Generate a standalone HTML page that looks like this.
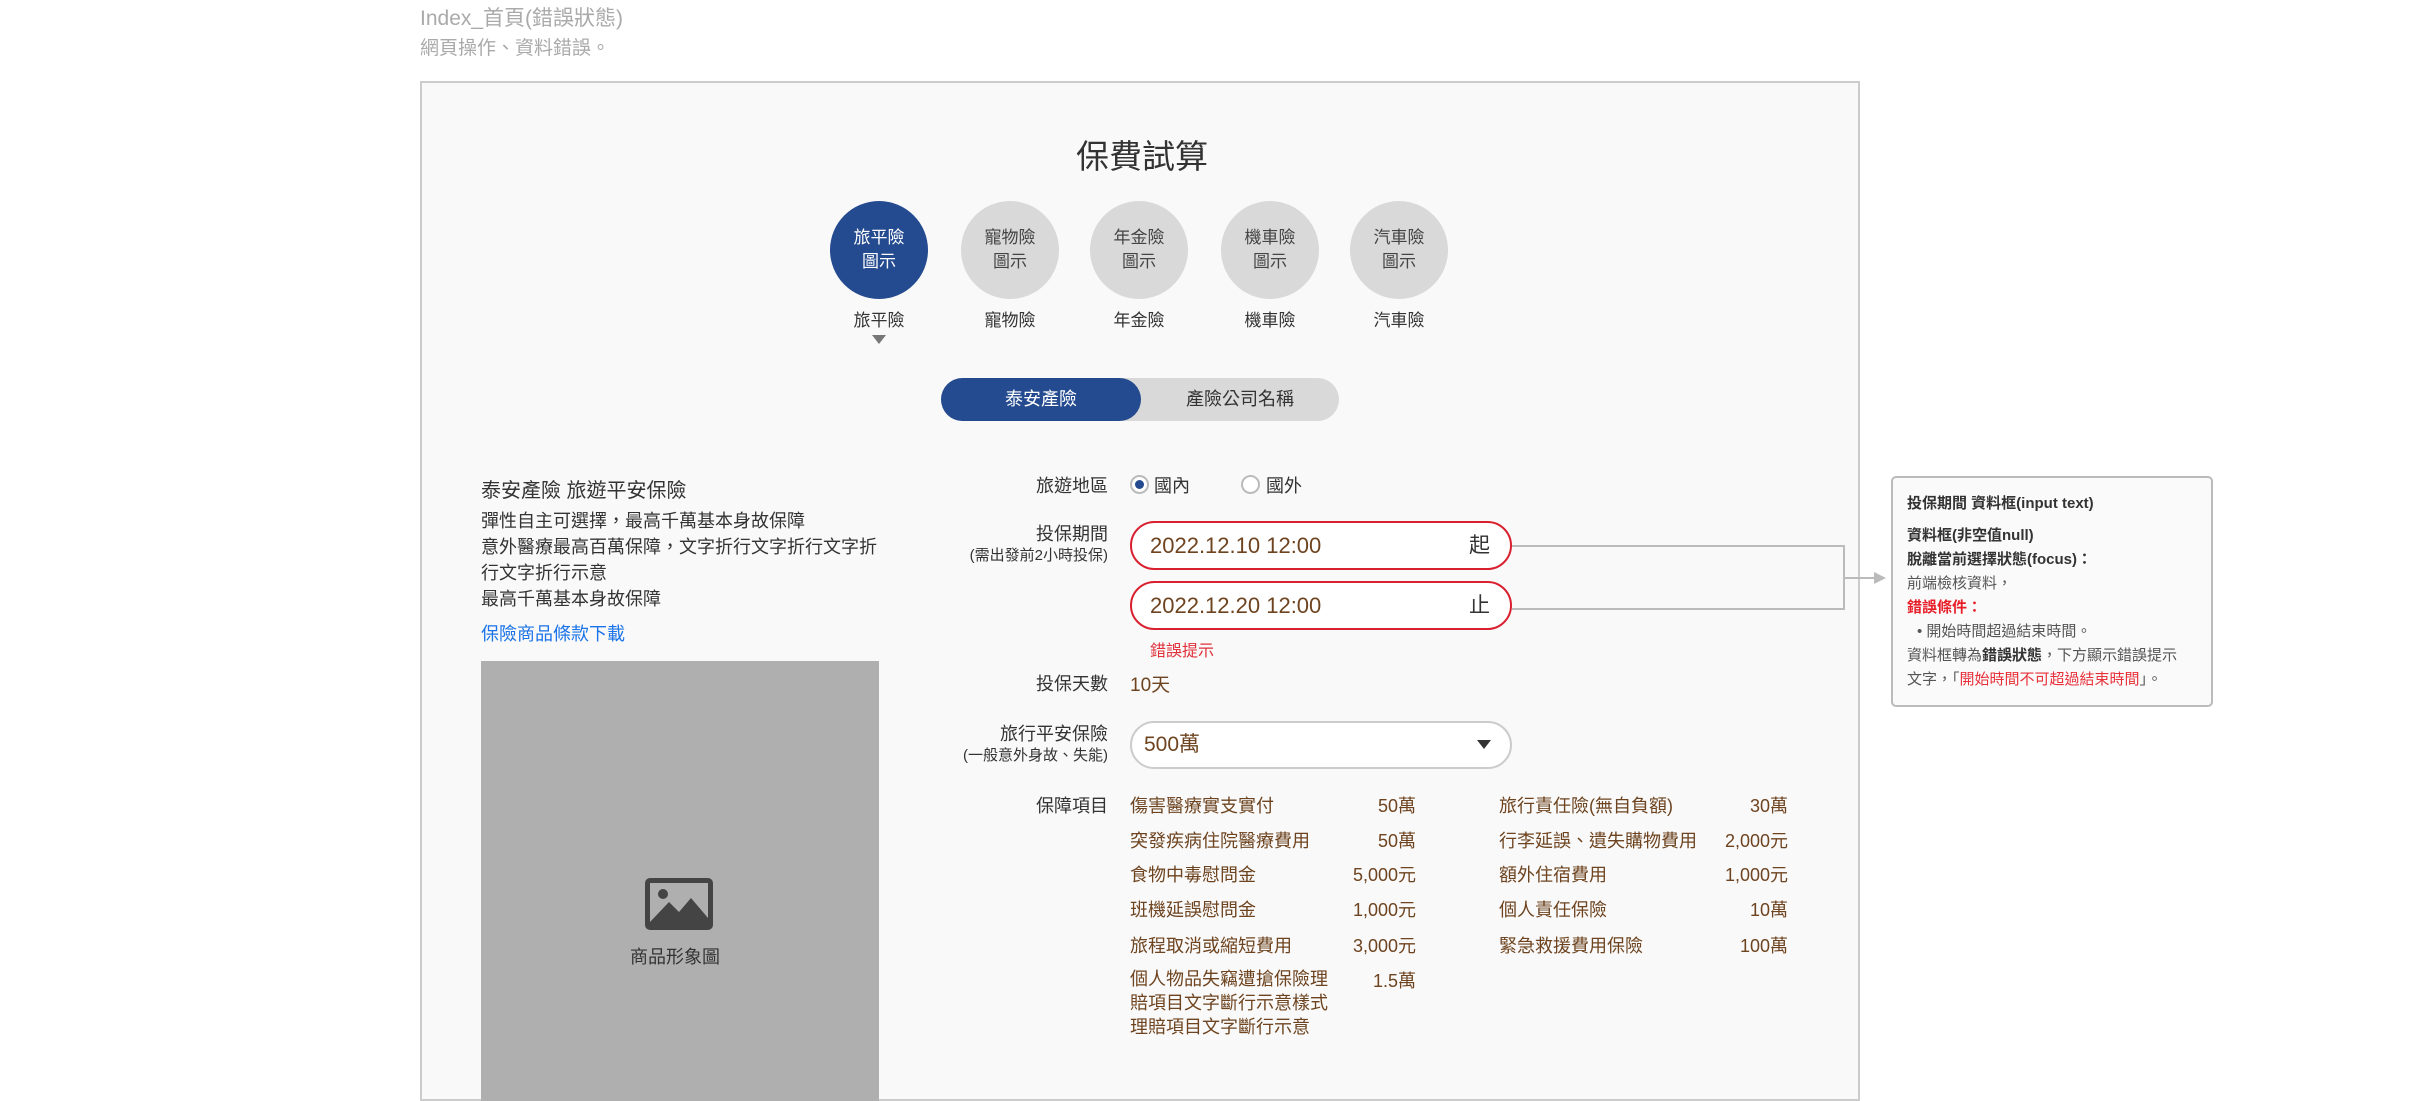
<!DOCTYPE html>
<html><head><meta charset="utf-8"><style>
*{margin:0;padding:0;box-sizing:border-box}
body{width:2410px;height:1088px;overflow:hidden;background:#fff;font-family:"Liberation Sans","Noto Sans CJK TC",sans-serif;position:relative;color:#333}
.a{position:absolute;white-space:nowrap}
.frame{position:absolute;left:420px;top:81px;width:1440px;height:1020px;border:2px solid #ccc;background:#f9f9f9}
.c{position:absolute;width:98px;height:98px;border-radius:50%;background:#d9d9d9;color:#444;font-size:17px;line-height:24px;text-align:center;padding-top:25px}
.cl{position:absolute;width:120px;text-align:center;font-size:17px;color:#333}
.lbl{position:absolute;right:1302px;text-align:right;font-size:18px;color:#333;white-space:nowrap}
.br{color:#6e4420}
.inp{position:absolute;left:1130px;width:382px;height:49px;border:2px solid #d9202f;border-radius:25px;background:#fff;font-size:22px;color:#6e4420;padding:0 0 0 18px;line-height:45px}
.inp span{position:absolute;right:20px;color:#333;font-size:21px}
.it{position:absolute;font-size:18px;color:#6e4420;white-space:nowrap}
.v{position:absolute;font-size:18px;color:#6e4420;text-align:right;width:150px}
.note{position:absolute;left:1891px;top:476px;width:322px;height:231px;border:2px solid #bbb;border-radius:5px;background:#fafafa;font-size:15px;color:#333;padding:14px 14px}
</style></head><body>
<div class="a" style="left:420px;top:2px;font-size:21px;color:#aaa">Index_首頁(錯誤狀態)</div>
<div class="a" style="left:420px;top:33px;font-size:19px;color:#aaa">網頁操作、資料錯誤。</div>
<div class="frame"></div>
<div class="a" style="left:1076px;top:130px;font-size:33px;color:#333">保費試算</div>

<div class="c" style="left:830px;top:201px;background:#244a8f;color:#fff">旅平險<br>圖示</div>
<div class="c" style="left:961px;top:201px">寵物險<br>圖示</div>
<div class="c" style="left:1090px;top:201px">年金險<br>圖示</div>
<div class="c" style="left:1221px;top:201px">機車險<br>圖示</div>
<div class="c" style="left:1350px;top:201px">汽車險<br>圖示</div>
<div class="cl" style="left:819px;top:306px">旅平險</div>
<div class="cl" style="left:950px;top:306px">寵物險</div>
<div class="cl" style="left:1079px;top:306px">年金險</div>
<div class="cl" style="left:1210px;top:306px">機車險</div>
<div class="cl" style="left:1339px;top:306px">汽車險</div>
<div class="a" style="left:872px;top:335px;width:0;height:0;border-left:7px solid transparent;border-right:7px solid transparent;border-top:9px solid #777"></div>

<div class="a" style="left:941px;top:378px;width:398px;height:43px;border-radius:22px;background:#d9d9d9"></div>
<div class="a" style="left:941px;top:378px;width:200px;height:43px;border-radius:22px;background:#244a8f;color:#fff;font-size:18px;text-align:center;line-height:43px">泰安產險</div>
<div class="a" style="left:1141px;top:378px;width:198px;height:43px;color:#333;font-size:18px;text-align:center;line-height:43px">產險公司名稱</div>

<div class="a" style="left:481px;top:474px;font-size:20px;color:#333">泰安產險 旅遊平安保險</div>
<div class="a" style="left:481px;top:508px;font-size:18px;line-height:26px;color:#333">彈性自主可選擇，最高千萬基本身故保障</div>
<div class="a" style="left:481px;top:534px;font-size:18px;line-height:26px;color:#333">意外醫療最高百萬保障，文字折行文字折行文字折<br>行文字折行示意</div>
<div class="a" style="left:481px;top:586px;font-size:18px;line-height:26px;color:#333">最高千萬基本身故保障</div>
<div class="a" style="left:481px;top:620px;font-size:18px;color:#1a73e8">保險商品條款下載</div>
<div class="a" style="left:481px;top:661px;width:398px;height:440px;background:#afafaf"></div>
<svg class="a" style="left:645px;top:878px" width="68" height="52" viewBox="0 0 68 52"><rect x="0" y="0" width="68" height="52" rx="5" fill="#444"/><rect x="5" y="5" width="58" height="42" fill="#afafaf"/><circle cx="18" cy="16" r="5" fill="#444"/><path d="M5 44 L24 24 L34 34 L46 20 L63 40 L63 47 L5 47Z" fill="#444"/></svg>
<div class="a" style="left:630px;top:943px;font-size:18px;color:#333">商品形象圖</div>

<div class="lbl" style="top:472px">旅遊地區</div>
<div class="a" style="left:1130px;top:475px;width:19px;height:19px;border-radius:50%;border:2px solid #bbb;background:#fff"></div>
<div class="a" style="left:1135px;top:480px;width:9px;height:9px;border-radius:50%;background:#244a8f"></div>
<div class="a" style="left:1154px;top:472px;font-size:18px">國內</div>
<div class="a" style="left:1241px;top:475px;width:19px;height:19px;border-radius:50%;border:2px solid #bbb;background:#fff"></div>
<div class="a" style="left:1266px;top:472px;font-size:18px">國外</div>

<div class="lbl" style="top:520px">投保期間</div>
<div class="lbl" style="top:544px;font-size:15px">(需出發前2小時投保)</div>
<div class="inp" style="top:521px">2022.12.10 12:00<span>起</span></div>
<div class="inp" style="top:581px">2022.12.20 12:00<span>止</span></div>
<div class="a" style="left:1150px;top:637px;font-size:16px;color:#e0303a">錯誤提示</div>

<div class="lbl" style="top:670px">投保天數</div>
<div class="a br" style="left:1130px;top:670px;font-size:19px">10天</div>

<div class="lbl" style="top:720px">旅行平安保險</div>
<div class="lbl" style="top:744px;font-size:15px">(一般意外身故、失能)</div>
<div class="a" style="left:1130px;top:721px;width:382px;height:48px;border:2px solid #ccc;border-radius:24px;background:#fff;font-size:21px;color:#6e4420;padding-left:12px;line-height:44px">500萬</div>
<div class="a" style="left:1477px;top:740px;width:0;height:0;border-left:7px solid transparent;border-right:7px solid transparent;border-top:9px solid #333"></div>

<div class="lbl" style="top:792px">保障項目</div>
<div class="it" style="left:1130px;top:792px">傷害醫療實支實付</div><div class="v" style="left:1266px;top:792px">50萬</div>
<div class="it" style="left:1130px;top:827px">突發疾病住院醫療費用</div><div class="v" style="left:1266px;top:827px">50萬</div>
<div class="it" style="left:1130px;top:861px">食物中毒慰問金</div><div class="v" style="left:1266px;top:861px">5,000元</div>
<div class="it" style="left:1130px;top:896px">班機延誤慰問金</div><div class="v" style="left:1266px;top:896px">1,000元</div>
<div class="it" style="left:1130px;top:932px">旅程取消或縮短費用</div><div class="v" style="left:1266px;top:932px">3,000元</div>
<div class="it" style="left:1130px;top:967px;line-height:24px">個人物品失竊遭搶保險理<br>賠項目文字斷行示意樣式<br>理賠項目文字斷行示意</div><div class="v" style="left:1266px;top:967px">1.5萬</div>
<div class="it" style="left:1499px;top:792px">旅行責任險(無自負額)</div><div class="v" style="left:1638px;top:792px">30萬</div>
<div class="it" style="left:1499px;top:827px">行李延誤、遺失購物費用</div><div class="v" style="left:1638px;top:827px">2,000元</div>
<div class="it" style="left:1499px;top:861px">額外住宿費用</div><div class="v" style="left:1638px;top:861px">1,000元</div>
<div class="it" style="left:1499px;top:896px">個人責任保險</div><div class="v" style="left:1638px;top:896px">10萬</div>
<div class="it" style="left:1499px;top:932px">緊急救援費用保險</div><div class="v" style="left:1638px;top:932px">100萬</div>

<svg class="a" style="left:1512px;top:540px" width="380" height="80"><path d="M0 6 H332 V69 H0 M332 38 H362" fill="none" stroke="#bbb" stroke-width="2"/><path d="M362 32 L374 38 L362 44Z" fill="#bbb"/></svg>

<div class="note">
<div style="font-size:15px;font-weight:bold;color:#333">投保期間 資料框(input text)</div>
<div style="margin-top:11px;font-weight:bold;line-height:24px">資料框(非空值null)<br>脫離當前選擇狀態(focus)：</div>
<div style="line-height:24px;color:#555">前端檢核資料，</div>
<div style="line-height:24px;color:#e8202a;font-weight:bold">錯誤條件：</div>
<div style="line-height:24px;color:#555;padding-left:10px">• 開始時間超過結束時間。</div>
<div style="line-height:24px;color:#555">資料框轉為<b style="color:#333">錯誤狀態</b>，下方顯示錯誤提示<br>文字，「<span style="color:#e8303a">開始時間不可超過結束時間</span>」。</div>
</div>
</body></html>
